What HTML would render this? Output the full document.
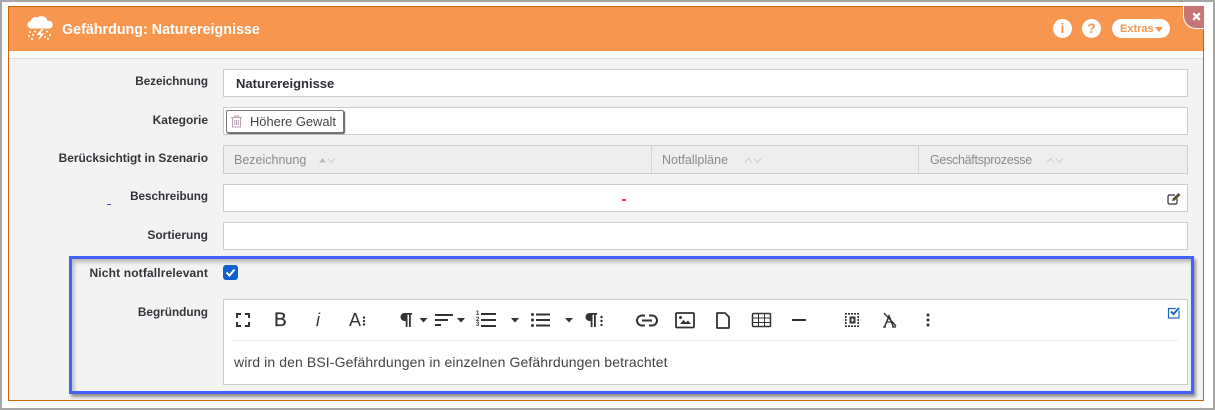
<!DOCTYPE html>
<html lang="de"><head><meta charset="utf-8"><title>Gefährdung: Naturereignisse</title>
<style>
*{box-sizing:border-box}
html,body{margin:0;padding:0}
body{width:1215px;height:410px;position:relative;overflow:hidden;background:#fff;font-family:"Liberation Sans",sans-serif;color:#333}
.a{position:absolute}
.lab{position:absolute;right:1007px;font-size:12px;font-weight:700;color:#33333a;white-space:nowrap;line-height:16px}
.inp{position:absolute;left:223px;width:965px;height:28px;background:#fff;border:1px solid #ccc}
.th{position:absolute;top:153px;font-size:12.5px;color:#8b8b8b;line-height:15px;white-space:nowrap}
svg{position:absolute;overflow:visible}
</style></head><body>
<div class="a" style="left:0;top:0;width:1215px;height:410px;border:solid #a6a6a6;border-width:2px"></div>
<div class="a" style="left:8px;top:6px;width:1196px;height:395px;background:#f3f3f3;border:1px solid #cc6600"></div>
<div class="a" style="left:9px;top:7px;width:1194px;height:44px;background:#f7964f"></div>
<div class="a" style="left:9px;top:51px;width:1194px;height:8px;background:#fafafa;border-bottom:1px solid #ddd"></div>

<svg style="left:26px;top:14px" width="28" height="30" viewBox="0 0 28 30"><path d="M4.500 14.500a3.800 3.800 0 0 1 .2-7.500 5 5 0 0 1 7-3.500 6 6 0 0 1 9.800 3.500 3.800 3.800 0 0 1 2.700 7.500z" fill="#fff"/><path d="M15.500 15l-5 6h4l-2.500 5.500 6.500-7h-4l3-4.500z" fill="#fff"/><g fill="#fff"><circle cx="4" cy="18" r="1"/><circle cx="7" cy="21" r="1"/><circle cx="3" cy="22" r="1"/><circle cx="9" cy="17.500" r="1"/><circle cx="21" cy="17.500" r="1"/><circle cx="24" cy="21" r="1"/><circle cx="19" cy="23" r="1"/><circle cx="6" cy="25" r="1"/><circle cx="22" cy="25" r="1"/></g></svg>
<div class="a" style="left:62px;top:21px;font-size:14.300px;font-weight:700;color:#fff;line-height:18px;white-space:nowrap">Gefährdung: Naturereignisse</div>

<div class="a" style="left:1053px;top:19px;width:19px;height:19px;border-radius:50%;background:#fff;color:#f7964f;font:700 14px/19px 'Liberation Sans',sans-serif;text-align:center">i</div>
<div class="a" style="left:1082px;top:19px;width:19px;height:19px;border-radius:50%;background:#fff;color:#f7964f;font:700 14px/19px 'Liberation Sans',sans-serif;text-align:center">?</div>
<div class="a" style="left:1112px;top:19px;width:58px;height:19px;border-radius:10px;background:#fff;color:#f7964f;font:700 11px/20px 'Liberation Sans',sans-serif;padding-left:8px">Extras</div>
<div class="a" style="left:1155px;top:27px;width:0;height:0;border:4.500px solid transparent;border-top:5px solid #f7964f;border-bottom:0"></div>
<div class="a" style="left:1183px;top:6px;width:21px;height:23px;background:#c87578;border-left:1.500px solid #fff;border-bottom:1.500px solid #fff;border-bottom-left-radius:13px"></div>
<svg style="left:1192px;top:12px" width="9" height="9" viewBox="0 0 9 9"><path d="M1.200 1.200l6.600 6.600M7.800 1.200L1.200 7.800" stroke="#fff" stroke-width="2.400" fill="none"/></svg>

<div class="lab" style="top:74px;font-size:11.700px">Bezeichnung</div>
<div class="inp" style="top:69px"><div class="a" style="left:12px;top:6px;font-size:13px;font-weight:700;color:#2f2f3a;line-height:15px">Naturereignisse</div></div>

<div class="lab" style="top:112px">Kategorie</div>
<div class="inp" style="top:107px"></div>
<div class="a" style="left:226px;top:110px;width:118px;height:23px;background:#fff;border:1px solid #777;border-radius:2px;box-shadow:1px 1px 1px #555;font-size:12.900px;line-height:21px;padding-left:23px;color:#444">Höhere Gewalt</div>
<svg style="left:231px;top:115px" width="11" height="13" viewBox="0 0 11 13" fill="none" stroke="#b9a4b4" stroke-width="1"><path d="M0 2.500h11M3.500 2.500V1h4v1.500M1.500 2.500v9.500h8V2.500M3.700 5v5M5.500 5v5M7.300 5v5"/></svg>

<div class="lab" style="top:150px;font-size:11.900px">Berücksichtigt in Szenario</div>
<div class="a" style="left:223px;top:145px;width:965px;height:29px;background:#eee;border:1px solid #ccc"></div>
<div class="a" style="left:651px;top:146px;width:1px;height:27px;background:#d4d4d4"></div>
<div class="a" style="left:918px;top:146px;width:1px;height:27px;background:#d4d4d4"></div>
<div class="th" style="left:234px">Bezeichnung</div>
<div class="th" style="left:662px">Notfallpläne</div>
<div class="th" style="left:930px;letter-spacing:-.3px">Geschäftsprozesse</div>
<svg style="left:319px;top:158px" width="16" height="5" viewBox="0 0 16 5"><path d="M0 4.500L3.500 0 7 4.500z" fill="#bbb"/><path d="M9 .5l3.500 4L16 .5" fill="none" stroke="#ccc"/></svg>
<svg style="left:745px;top:158px" width="16" height="5" viewBox="0 0 16 5" fill="none" stroke="#ccc"><path d="M0 4.500l3.500-4L7 4.500M9 .5l3.500 4L16 .5"/></svg>
<svg style="left:1047px;top:158px" width="16" height="5" viewBox="0 0 16 5" fill="none" stroke="#ccc"><path d="M0 4.500l3.500-4L7 4.500M9 .5l3.500 4L16 .5"/></svg>

<div class="lab" style="top:189px;font-size:11.700px">Beschreibung</div>
<div class="inp" style="top:184px"></div>
<div class="a" style="left:107px;top:204px;width:4px;height:1px;background:#3a4ff0"></div>
<div class="a" style="left:622px;top:199px;width:4px;height:2px;background:#e33"></div>
<svg style="left:1167px;top:192px" width="14" height="13" viewBox="0 0 14 13" fill="none"><path d="M10 6.500V10.500a1.500 1.500 0 0 1-1.500 1.500H2.500A1.500 1.500 0 0 1 1 10.500V4.500A1.500 1.500 0 0 1 2.500 3H8" stroke="#2f2f3a" stroke-width="1.200"/><path d="M5 9l.6-2.400L11.500 1l2 2-5.900 5.600z" fill="#5a5030"/></svg>

<div class="lab" style="top:227px">Sortierung</div>
<div class="inp" style="top:222px"></div>

<div class="a" style="left:69px;top:256px;width:1125px;height:138px;border:3px solid #4461fb;box-shadow:2px 3px 3px rgba(0,0,0,.4),inset 2px 3px 4px rgba(0,0,0,.25)"></div>
<div class="lab" style="top:265px;letter-spacing:.15px">Nicht notfallrelevant</div>
<div class="a" style="left:223px;top:265px;width:15px;height:15px;border-radius:3px;background:#0d62cf"></div>
<svg style="left:223px;top:265px" width="15" height="15" viewBox="0 0 15 15"><path d="M3.500 7.500l3 3 5-6" fill="none" stroke="#fff" stroke-width="2"/></svg>

<div class="lab" style="top:304px;font-size:11.800px">Begründung</div>
<div class="a" style="left:223px;top:299px;width:965px;height:86px;background:#fff;border:1px solid #ccc"></div>
<div class="a" style="left:233px;top:340px;width:945px;height:1px;background:#ececec"></div>
<div class="a" style="left:234px;top:354px;font-size:14px;letter-spacing:.11px;line-height:16px;color:#444;white-space:nowrap">wird in den BSI-Gefährdungen in einzelnen Gefährdungen betrachtet</div>

<svg style="left:0;top:0" width="1215" height="410" viewBox="0 0 1215 410" fill="none" stroke="#333" stroke-width="2">
<path d="M237 318v-4h4M245 314h4v4M249 322v4h-4M241 326h-4v-4"/>
<rect x="1168.500" y="308.500" width="10.500" height="9.500" stroke="#1a66c8" stroke-width="1.200"/>
<path d="M1171 311.500l2.500 2.500 5.500-6" stroke="#fff" stroke-width="3.600"/>
<path d="M1171 311.500l2.500 2.500 5.500-6" stroke="#1a66c8" stroke-width="2"/>
<path d="M792 320h14"/>
<path d="M435 315h18M435 320h13M435 325h6"/>
<path d="M481 314h15M481 320h15M481 326h15"/>
<path d="M536 314.500h14M536 320h14M536 325.500h14"/>
<path d="M645 315.500h-3a5 5 0 0 0 0 10h3M649 315.500h3a5 5 0 0 1 0 10h-3M642 320.500h10"/>
<rect x="676" y="313" width="18" height="14.500" rx="1" stroke-width="1.800"/>
<path d="M717 313h8l4 4v10.500a.5.5 0 0 1-.5.5h-11a.5.5 0 0 1-.5-.5z" stroke-width="1.800" stroke-linejoin="round"/>
<rect x="752.500" y="313.500" width="18" height="13" rx="1" stroke-width="1.500"/>
<path d="M752 318h18M752 322.500h18M758.500 314v12M764.500 314v12" stroke-width="1"/>
<path d="M845 313.800h14M845 326.200h14M845.800 316v9M858.200 316v9" stroke-width="1.600" stroke-dasharray="2 1"/>
<rect x="850.500" y="317.500" width="4" height="5" stroke-width="2"/>
<path d="M884.500 327l4.500-11 4.500 11" stroke-width="1.500"/>
<path d="M883 327h3M892 327h4M886 322h7" stroke-width="1.200"/>
<path d="M884 313l12 13" stroke-width="1.400"/>
</svg>
<svg style="left:0;top:0" width="1215" height="410" viewBox="0 0 1215 410" fill="#333">
<path d="M419.500 318h8l-4 4.500zM457 318h8l-4 4.500zM511 318h8l-4 4.500zM565 318h8l-4 4.500z"/>
<circle cx="364" cy="317.500" r="1.200"/><circle cx="364" cy="321" r="1.200"/><circle cx="364" cy="324.500" r="1.200"/>
<circle cx="601.500" cy="317" r="1.200"/><circle cx="601.500" cy="321" r="1.200"/><circle cx="601.500" cy="325" r="1.200"/>
<circle cx="532.500" cy="314.500" r="1.500"/><circle cx="532.500" cy="320" r="1.500"/><circle cx="532.500" cy="325.500" r="1.500"/>
<circle cx="928" cy="315" r="1.500"/><circle cx="928" cy="320" r="1.500"/><circle cx="928" cy="325" r="1.500"/>
<path d="M680 324l3.500-4 2.500 2.500 2-2 3 3.500z"/><circle cx="680.500" cy="317.500" r="1.500"/>
<path d="M412 313v1.800h-1.200V327h-1.800V314.800h-1.500V327h-1.800v-6h-1.200a4 4 0 0 1 0-8z"/>
<path d="M597 313v1.800h-1.200V327h-1.800V314.800h-1.500V327h-1.800v-6h-1.200a4 4 0 0 1 0-8z"/>
</svg>
<div class="a" style="left:274px;top:311px;font-size:19px;line-height:19px;color:#333;-webkit-text-stroke:.3px #333">B</div>
<div class="a" style="left:316px;top:311px;font-size:18px;line-height:19px;color:#333;font-style:italic">i</div>
<div class="a" style="left:349px;top:311px;font-size:18px;line-height:19px;color:#333">A</div>
<div class="a" style="left:476px;top:312px;font-size:6px;line-height:5.500px;color:#333;font-weight:700">1<br>2<br>3</div>
</body></html>
